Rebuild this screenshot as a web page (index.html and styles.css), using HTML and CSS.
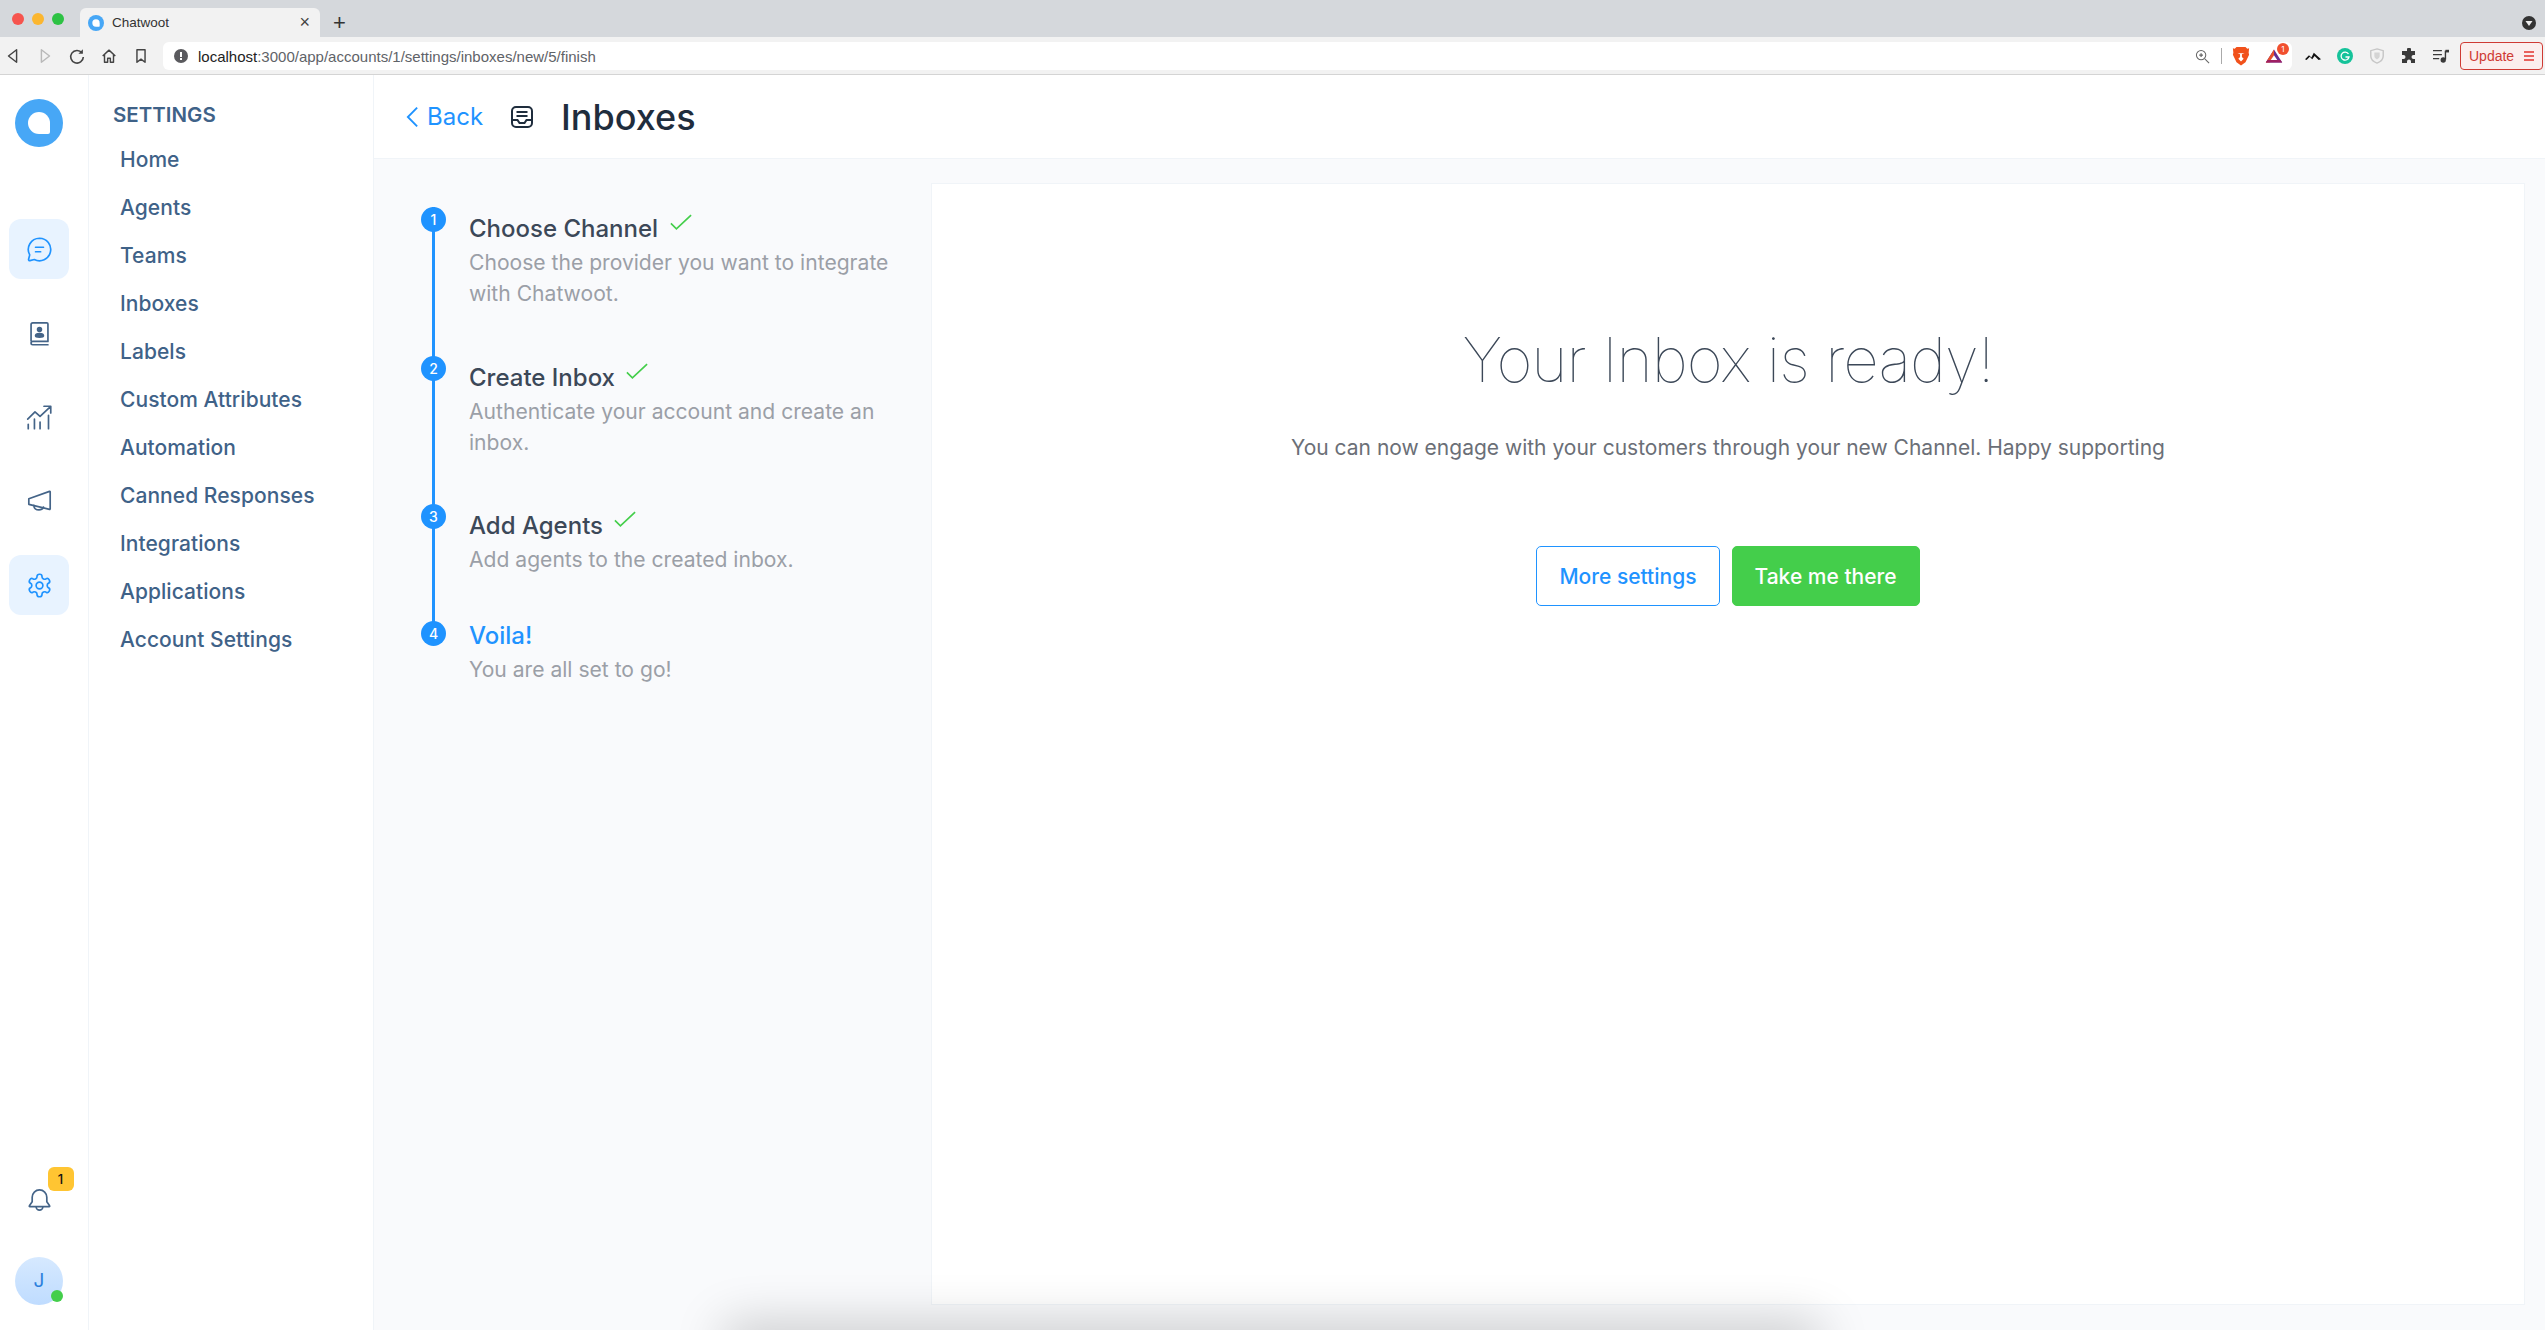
FILE: index.html
```html
<!DOCTYPE html>
<html>

<head>
    <title>Chatwoot</title>
    <link rel="stylesheet" href="styles.css">
</head>

<body>
    <div class="tabstrip">
        <div class="lights">
            <span class="light red"></span>
            <span class="light yellow"></span>
            <span class="light green"></span>
        </div>
        <div class="tab">
            <svg class="tab-logo" viewBox="0 0 48 48"><circle cx="24" cy="24" r="24" fill="#47a7f6"/><path d="M24 13a11 11 0 1 0 0 22h9a2 2 0 0 0 2-2v-9a11 11 0 0 0-11-11z" fill="#fff"/></svg>
            <span class="tab-title">Chatwoot</span>
            <span class="tab-close">×</span>
        </div>
        <span class="tab-new">+</span>
        <svg class="tab-menu" viewBox="0 0 14 14"><circle cx="7" cy="7" r="7" fill="#333"/><path d="M3.5 5h7L7 10z" fill="#eee"/></svg>
    </div>

    <div class="toolbar">
        <div class="nav-buttons">
            <svg viewBox="0 0 20 20"><path d="M14 3v14L5 10z" fill="none" stroke="#444" stroke-width="1.6" stroke-linejoin="round"/></svg>
            <svg viewBox="0 0 20 20"><path d="M6 3v14l9-7z" fill="none" stroke="#b9b9b9" stroke-width="1.6" stroke-linejoin="round"/></svg>
            <svg viewBox="0 0 20 20"><path d="M15.5 6.5A7 7 0 1 0 17 11" fill="none" stroke="#444" stroke-width="1.8"/><path d="M16.5 2.5v5h-5z" fill="#444"/></svg>
            <svg viewBox="0 0 20 20"><path d="M3 10l7-6.5 7 6.5M5 8.5V17h3.500v-4.500h3V17H15V8.500" fill="none" stroke="#444" stroke-width="1.6" stroke-linejoin="round"/></svg>
            <svg viewBox="0 0 20 20"><path d="M5.500 3h9v14L10 13.500 5.500 17z" fill="none" stroke="#444" stroke-width="1.6" stroke-linejoin="round"/></svg>
        </div>
        <div class="omnibox">
            <svg class="info" viewBox="0 0 14 14"><circle cx="7" cy="7" r="7" fill="#5a5a5e"/><rect x="6" y="3" width="2" height="5" fill="#fff"/><rect x="6" y="9" width="2" height="2" fill="#fff"/></svg>
            <span class="url"><b>localhost</b>:3000/app/accounts/1/settings/inboxes/new/5/finish</span>
            <svg class="zoom-icon" viewBox="0 0 16 16"><circle cx="6.500" cy="6.500" r="5" fill="none" stroke="#666" stroke-width="1.100"/><path d="M10.500 10.500L15 15" stroke="#666" stroke-width="1.100"/><path d="M4.500 6.500h4M6.500 4.500v4" stroke="#666" stroke-width="1.300"/></svg>
            <span class="omni-divider"></span>
            <svg class="brave" viewBox="0 0 20 22"><path d="M5 1h10l2 2 2-.5-.5 5 .5 2-4 8.500-5 3.500-5-3.500-4-8.500.5-2-.5-5 2 .5z" fill="#f1511b"/><path d="M6 8l3 1v3l-2 2 3 3 3-3-2-2V9l3-1" fill="#fff"/></svg>
            <span class="bat">
                <svg viewBox="0 0 22 18"><path d="M11 1L1 17h20z" fill="#662d91"/><path d="M11 1L1 17h5L11 8z" fill="#e8502c"/><path d="M11 8l4 6H7z" fill="#fff"/><path d="M1 17h20l-2-3H3z" fill="#9e1f63"/></svg>
                <span class="bat-count">1</span>
            </span>
        </div>
        <div class="extensions">
            <svg viewBox="0 0 20 12" class="ext-mountain"><path d="M0 10l5-5 3 3 3-6 9 8-3 1-5-5-3 4-3-3-4 4z" fill="#111"/></svg>
            <svg viewBox="0 0 16 16"><circle cx="8" cy="8" r="8" fill="#15c39a"/><path d="M11.500 6A4 4 0 1 0 12 9H8.500" fill="none" stroke="#fff" stroke-width="1.300"/></svg>
            <svg viewBox="0 0 16 18"><path d="M8 1l7 2v6c0 4-3 6.500-7 8-4-1.500-7-4-7-8V3z" fill="none" stroke="#c6c6c6" stroke-width="1.600"/><path d="M5 5h6v4c0 2-1.500 3-3 4-1.500-1-3-2-3-4z" fill="#d4d4d4"/></svg>
            <svg viewBox="0 0 16 16"><path d="M6 1.500a2 2 0 0 1 4 0V3h4v4h-1.500a2 2 0 0 0 0 4H14v4h-4v-1.500a2 2 0 0 0-4 0V15H1v-4h1.500a2 2 0 0 0 0-4H1V3h5z" fill="#3a3a3a"/></svg>
            <svg viewBox="0 0 18 16"><path d="M0 2h10M0 6.500h10M0 11h7" stroke="#3a3a3a" stroke-width="1.400"/><path d="M14 2v10" stroke="#3a3a3a" stroke-width="1.600"/><path d="M14 1h4v3h-4z" fill="#3a3a3a"/><circle cx="11.500" cy="12.500" r="3" fill="#3a3a3a"/></svg>
        </div>
        <div class="update">
            <span>Update</span>
            <span class="update-lines"><i></i><i></i><i></i></span>
        </div>
    </div>

    <div class="app">
        <div class="rail">
            <svg class="logo" viewBox="0 0 48 48"><circle cx="24" cy="24" r="24" fill="#47a7f6"/><path d="M24 13a11 11 0 1 0 0 22h9a2 2 0 0 0 2-2v-9a11 11 0 0 0-11-11z" fill="#fff"/></svg>

            <a class="rail-item active">
                <svg viewBox="0 0 24 24"><path d="M12 2a10 10 0 1 1-4.600 18.900l-3.900 1a1 1 0 0 1-1.200-1.200l1-3.900A10 10 0 0 1 12 2z"/><path d="M8.500 10h7M8.500 14h4.500"/></svg>
            </a>
            <a class="rail-item">
                <svg viewBox="0 0 24 24"><path d="M4.500 18.500V4a1.500 1.500 0 0 1 1.500-1.500h12.500a1 1 0 0 1 1 1V19H6a1.500 1.500 0 0 0 0 3h13.500"/><circle cx="12" cy="8.500" r="1.700" fill="currentColor"/><path d="M8.500 14c0-1.500 1.500-2 3.500-2s3.500.5 3.500 2c0 .8-1.500 1.200-3.500 1.200s-3.500-.4-3.500-1.200z" fill="currentColor"/></svg>
            </a>
            <a class="rail-item">
                <svg viewBox="0 0 24 24"><path d="M1.500 13.500L8 7l4.500 4L21.500 2.500M16 2h6v6"/><path d="M2 18v4M7.500 13.500V22M12.500 16v6M20 10v12"/></svg>
            </a>
            <a class="rail-item">
                <svg viewBox="0 0 24 24"><path d="M21.500 3.500v15a.5.500 0 0 1-.6.500L2.500 14.500V9.500L20.900 3a.5.500 0 0 1 .6.500z"/><path d="M7 15.500c0 2.500 2 4 4.500 4 2 0 3.500-1 4-2.500"/></svg>
            </a>
            <a class="rail-item active">
                <svg viewBox="0 0 24 24"><path d="M12.220 2h-.44a2 2 0 0 0-2 2v.18a2 2 0 0 1-1 1.730l-.43.250a2 2 0 0 1-2 0l-.15-.08a2 2 0 0 0-2.730.730l-.22.380a2 2 0 0 0 .73 2.730l.15.100a2 2 0 0 1 1 1.720v.510a2 2 0 0 1-1 1.740l-.15.090a2 2 0 0 0-.73 2.730l.22.380a2 2 0 0 0 2.730.730l.15-.08a2 2 0 0 1 2 0l.43.250a2 2 0 0 1 1 1.730V20a2 2 0 0 0 2 2h.44a2 2 0 0 0 2-2v-.18a2 2 0 0 1 1-1.730l.43-.25a2 2 0 0 1 2 0l.15.080a2 2 0 0 0 2.730-.73l.22-.39a2 2 0 0 0-.73-2.730l-.15-.08a2 2 0 0 1-1-1.740v-.5a2 2 0 0 1 1-1.740l.15-.09a2 2 0 0 0 .73-2.730l-.22-.38a2 2 0 0 0-2.730-.73l-.15.080a2 2 0 0 1-2 0l-.43-.25a2 2 0 0 1-1-1.730V4a2 2 0 0 0-2-2z"/><circle cx="12" cy="12" r="3"/></svg>
            </a>

            <div class="rail-bottom">
                <a class="rail-bell">
                    <svg viewBox="0 0 24 24"><path d="M5.500 10a6.500 6.500 0 0 1 13 0v4l2.500 3.500a.5.500 0 0 1-.4.800H3.400a.5.500 0 0 1-.4-.8L5.500 14z"/><path d="M9 18.500a3 3 0 0 0 6 0"/></svg>
                    <span class="bell-count">1</span>
                </a>
                <div class="avatar">
                    J
                    <span class="avatar-status"></span>
                </div>
            </div>
        </div>

        <div class="settings-menu">
            <div class="settings-title">SETTINGS</div>
            <ul>
                <li>Home</li>
                <li>Agents</li>
                <li>Teams</li>
                <li>Inboxes</li>
                <li>Labels</li>
                <li>Custom Attributes</li>
                <li>Automation</li>
                <li>Canned Responses</li>
                <li>Integrations</li>
                <li>Applications</li>
                <li>Account Settings</li>
            </ul>
        </div>

        <div class="main">
            <div class="page-header">
                <a class="back">
                    <svg viewBox="0 0 14 24"><path d="M12 2L2 12l10 10"/></svg>
                    Back
                </a>
                <svg class="header-icon" viewBox="0 0 24 24"><rect x="2" y="2" width="20" height="20" rx="4"/><path d="M6.500 7h11M6.500 11h11M2 15h5.500l2 3h5l2-3H22"/></svg>
                <h1>Inboxes</h1>
            </div>

            <div class="wizard">
                <div class="steps">
                    <div class="step step-one">
                        <span class="step-num">1</span>
                        <h3>Choose Channel <svg class="tick" viewBox="0 0 24 18"><path d="M1 10l6 6L23 1"/></svg></h3>
                        <p>Choose the provider you want to integrate with Chatwoot.</p>
                    </div>
                    <div class="step step-two">
                        <span class="step-num">2</span>
                        <h3>Create Inbox <svg class="tick" viewBox="0 0 24 18"><path d="M1 10l6 6L23 1"/></svg></h3>
                        <p>Authenticate your account and create an inbox.</p>
                    </div>
                    <div class="step step-three">
                        <span class="step-num">3</span>
                        <h3>Add Agents <svg class="tick" viewBox="0 0 24 18"><path d="M1 10l6 6L23 1"/></svg></h3>
                        <p>Add agents to the created inbox.</p>
                    </div>
                    <div class="step step-last">
                        <span class="step-num">4</span>
                        <h3>Voila!</h3>
                        <p>You are all set to go!</p>
                    </div>
                </div>

                <div class="card">
                    <h2>Your Inbox is ready!</h2>
                    <p>You can now engage with your customers through your new Channel. Happy supporting</p>
                    <div class="card-actions">
                        <a class="btn btn-outline">More settings</a>
                        <a class="btn btn-success">Take me there</a>
                    </div>
                </div>
            </div>
        </div>
    </div>

    <div class="dock-shadow"></div>
</body>

</html>
```

FILE: styles.css
```css
* {
    box-sizing: border-box;
}

html,
body {
    height: 100%;
}

body {
    margin: 0;
    overflow: hidden;
    position: relative;
    font-family: Inter, 'Noto Sans', sans-serif;
    background-color: #fff;
    color: #3c4858;
}

/* browser chrome */
.tabstrip {
    display: flex;
    align-items: flex-end;
    height: 37px;
    padding-top: 8px;
    background-color: #d5d8dc;
    position: relative;
}

.lights {
    display: flex;
    gap: 8px;
    align-self: flex-start;
    padding: 5px 0 0 12px;
    width: 80px;
}

.light {
    width: 12px;
    height: 12px;
    border-radius: 50%;
}

.light.red {
    background-color: #f6544e;
}

.light.yellow {
    background-color: #fbb62f;
}

.light.green {
    background-color: #2dc244;
}

.tab {
    display: flex;
    align-items: center;
    width: 240px;
    height: 29px;
    padding: 0 10px 0 8px;
    background-color: #f2f2f2;
    border-radius: 6px 6px 0 0;
    font-family: 'Liberation Sans', sans-serif;
    font-size: 13.500px;
    color: #333;
}

.tab-logo {
    width: 16px;
    height: 16px;
    margin-right: 8px;
}

.tab-title {
    flex: 1;
}

.tab-close {
    font-size: 18px;
    color: #444;
}

.tab-new {
    margin-left: 13px;
    height: 29px;
    font-family: 'Liberation Sans', sans-serif;
    font-size: 22px;
    line-height: 29px;
    color: #333;
}

.tab-menu {
    position: absolute;
    right: 9px;
    top: 16px;
    width: 14px;
    height: 14px;
}

.toolbar {
    display: flex;
    align-items: center;
    height: 38px;
    padding: 1px 2px 0 0;
    background-color: #f2f2f2;
    border-bottom: 1px solid #d4d4d4;
}

.nav-buttons {
    display: flex;
    width: 163px;
    gap: 14px;
    padding-left: 4px;
}

.nav-buttons svg {
    width: 18px;
    height: 18px;
}

.omnibox {
    display: flex;
    align-items: center;
    width: 2129px;
    height: 28px;
    padding: 0 7px 0 11px;
    background-color: #fff;
    border-radius: 6px;
}

.info {
    width: 14px;
    height: 14px;
    margin-right: 10px;
}

.url {
    flex: 1;
    font-family: 'Liberation Sans', sans-serif;
    font-size: 15px;
    color: #5f6368;
}

.url b {
    font-weight: normal;
    color: #222;
}

.zoom-icon {
    width: 15px;
    height: 15px;
}

.omni-divider {
    width: 1px;
    height: 16px;
    margin: 0 10px 0 11px;
    background-color: #aaa;
}

.brave {
    width: 18px;
    height: 20px;
}

.bat {
    position: relative;
    display: block;
    width: 20px;
    height: 16px;
    margin-left: 15px;
}

.bat svg {
    display: block;
    width: 18px;
    height: 16px;
}

.bat-count {
    position: absolute;
    top: -5px;
    right: -4px;
    width: 12px;
    height: 12px;
    border-radius: 50%;
    background-color: #f1502f;
    color: #fff;
    font-size: 8px;
    line-height: 12px;
    text-align: center;
}

.extensions {
    display: flex;
    align-items: center;
    gap: 16px;
    padding-left: 13px;
}

.extensions svg {
    width: 16px;
    height: 16px;
}

.extensions .ext-mountain {
    width: 16px;
    height: 10px;
}

.update {
    display: flex;
    align-items: center;
    justify-content: space-between;
    width: 83px;
    height: 28px;
    margin-left: 11px;
    padding: 0 8px;
    background-color: #fbeeed;
    border: 1px solid #cf3a33;
    border-radius: 4px;
    font-family: 'Liberation Sans', sans-serif;
    font-size: 14px;
    color: #cf3a33;
}

.update-lines i {
    display: block;
    width: 10px;
    height: 2px;
    margin: 2px 0;
    background-color: #e8615c;
}

/* app */
.app {
    display: flex;
    height: 1255px;
}

.rail {
    display: flex;
    flex-direction: column;
    align-items: center;
    width: 89px;
    padding: 24px 10px 0 0;
    border-right: 1px solid #f0f4f8;
}

.logo {
    width: 48px;
    height: 48px;
    margin-bottom: 72px;
}

.rail-item {
    display: flex;
    align-items: center;
    justify-content: center;
    width: 60px;
    height: 60px;
    margin-bottom: 24px;
    border-radius: 12px;
    color: #446488;
}

.rail-item svg,
.rail-bell svg {
    width: 27px;
    height: 27px;
    fill: none;
    stroke: currentColor;
    stroke-width: 1.500;
    stroke-linecap: round;
    stroke-linejoin: round;
}

.rail-item.active {
    background-color: #e8f3ff;
    color: #1f93ff;
}

.rail-bottom {
    display: flex;
    flex-direction: column;
    align-items: center;
    margin-top: auto;
    padding-bottom: 25px;
}

.rail-bell {
    position: relative;
    display: block;
    height: 27px;
    margin-bottom: 44px;
    color: #446488;
}

.bell-count {
    position: absolute;
    top: -19px;
    left: 22px;
    width: 26px;
    height: 24px;
    border-radius: 6px;
    background-color: #ffc532;
    color: #111;
    font-size: 13px;
    font-weight: 500;
    line-height: 24px;
    text-align: center;
}

.avatar {
    position: relative;
    width: 48px;
    height: 48px;
    border-radius: 50%;
    background: linear-gradient(#d6e9ff, #bfdcff);
    color: #2b7fdc;
    font-size: 19px;
    line-height: 48px;
    text-align: center;
}

.avatar-status {
    position: absolute;
    right: 0;
    bottom: 3px;
    width: 12px;
    height: 12px;
    border-radius: 50%;
    background-color: #44ce4b;
}

.settings-menu {
    width: 285px;
    padding: 25px 0 0 24px;
    border-right: 1px solid #f0f4f8;
    color: #3f6288;
}

.settings-title {
    font-size: 20.500px;
    font-weight: 600;
    line-height: 30px;
    margin-bottom: 6px;
}

.settings-menu ul {
    list-style: none;
    margin: 0;
    padding: 0 0 0 7px;
}

.settings-menu li {
    height: 48px;
    font-size: 21px;
    font-weight: 500;
    letter-spacing: 0.05px;
    line-height: 48px;
}

.main {
    flex: 1;
    background-color: #f9fafc;
}

.page-header {
    display: flex;
    align-items: center;
    height: 84px;
    padding-left: 32px;
    background-color: #fff;
    border-bottom: 1px solid #f0f4f8;
}

.back {
    display: flex;
    align-items: center;
    gap: 8px;
    font-size: 24px;
    color: #1f93ff;
}

.back svg {
    width: 13px;
    height: 24px;
    fill: none;
    stroke: currentColor;
    stroke-width: 2;
}

.header-icon {
    width: 24px;
    height: 24px;
    margin: 0 27px;
    fill: none;
    stroke: #1f2d3d;
    stroke-width: 2;
}

.page-header h1 {
    margin: 0;
    font-size: 36px;
    font-weight: 500;
    color: #1f2d3d;
}

.wizard {
    display: flex;
    padding: 24px 20px 0 0;
}

.steps {
    width: 557px;
    padding: 24px 0 0 58px;
}

.step {
    position: relative;
    padding-left: 34px;
    border-left: 3px solid #1f93ff;
}

.step.step-last {
    border-left-color: transparent;
}

.step-one {
    height: 149px;
}

.step-two {
    height: 148px;
}

.step-three {
    height: 120px;
}

.step-num {
    position: absolute;
    left: -14px;
    top: 0;
    width: 25px;
    height: 25px;
    border-radius: 50%;
    background-color: #1f93ff;
    color: #fff;
    font-size: 14px;
    font-weight: 500;
    line-height: 25px;
    text-align: center;
}

.step h3 {
    margin: 0;
    font-size: 24px;
    font-weight: 500;
    line-height: 30px;
    padding-top: 7px;
    color: #3c4858;
}

.step-last h3 {
    margin-top: -3px;
    padding-top: 0;
    color: #1f93ff;
}

.tick {
    width: 22px;
    height: 17px;
    margin-left: 5px;
    vertical-align: 6px;
    fill: none;
    stroke: #44ce4b;
    stroke-width: 1.800;
}

.step p {
    margin: 0;
    padding: 3px 0 0 0;
    font-size: 21.100px;
    line-height: 31px;
    color: #9b9fa7;
}

.card {
    flex: 1;
    height: 1122px;
    padding-top: 140px;
    background-color: #fff;
    border: 1px solid #f0f4f8;
    text-align: center;
}

.card h2 {
    margin: 0;
    font-size: 62px;
    font-weight: 100;
    letter-spacing: -1px;
    line-height: 72px;
    color: #3c4858;
}

.card p {
    margin: 36px 0 0;
    font-size: 21px;
    line-height: 32px;
    color: #6b6f77;
}

.card-actions {
    display: flex;
    justify-content: center;
    gap: 12px;
    margin-top: 82px;
}

.btn {
    display: block;
    height: 60px;
    padding: 0 22px;
    border: 1px solid #1f93ff;
    border-radius: 5px;
    font-size: 21px;
    font-weight: 500;
    line-height: 60px;
}

.btn-outline {
    color: #1f93ff;
    background-color: #fff;
}

.btn-success {
    color: #fff;
    background-color: #44ce4b;
    border-color: #44ce4b;
}

/* shadow of a window lying below the page edge */
.dock-shadow {
    position: absolute;
    left: 730px;
    bottom: -30px;
    width: 1085px;
    height: 30px;
    box-shadow: 0 0 50px 5px rgba(0, 0, 0, 0.22);
}
```
